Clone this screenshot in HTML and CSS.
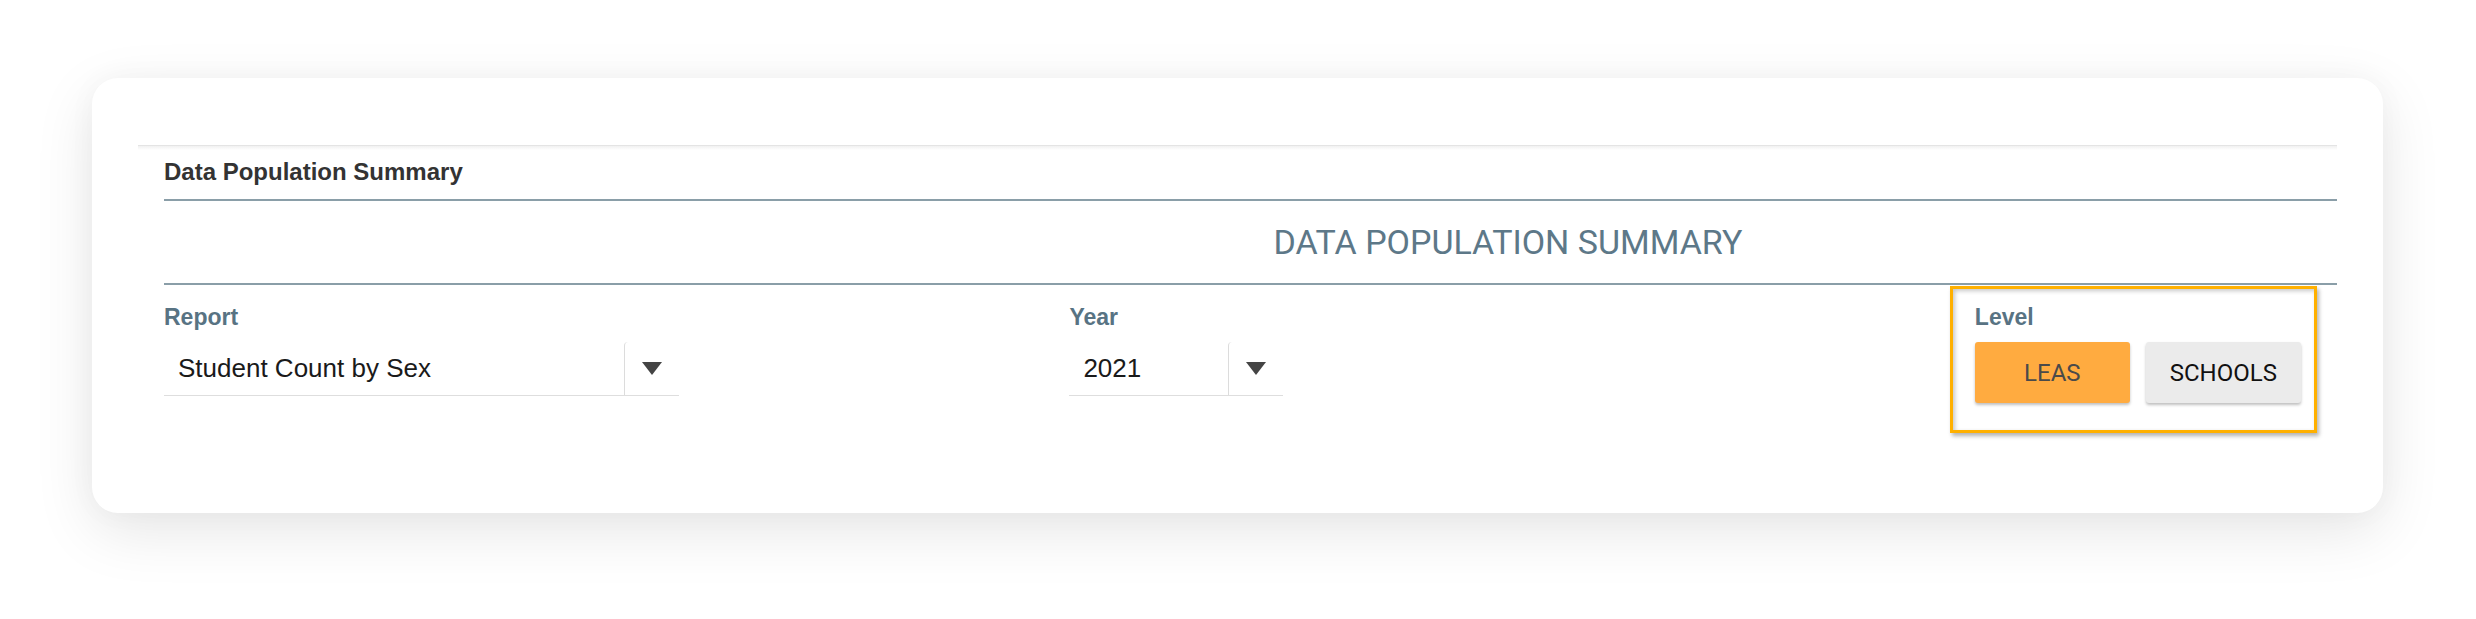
FILE: index.html
```html
<!DOCTYPE html>
<html lang="en">

<head>
  <meta charset="UTF-8">
  <meta name="viewport" content="width=device-width, initial-scale=1.0">
  <title>Data Population Summary</title>
  <link rel="stylesheet" href="styles.css">
</head>

<body>
  <div class="card">
    <div class="panel">
      <div class="panel-head">Data Population Summary</div>
      <h1 class="report-title">DATA POPULATION SUMMARY</h1>

      <div class="filters">
        <div class="field">
          <label class="field-label">Report</label>
          <div class="select select-wide">
            <span class="select-value">Student Count by Sex</span>
            <span class="select-arrow">
              <svg width="20" height="13" viewBox="0 0 20 13"><polygon points="0,0 20,0 10,13" fill="#444"/></svg>
            </span>
          </div>
        </div>

        <div class="field">
          <label class="field-label">Year</label>
          <div class="select select-narrow">
            <span class="select-value">2021</span>
            <span class="select-arrow">
              <svg width="20" height="13" viewBox="0 0 20 13"><polygon points="0,0 20,0 10,13" fill="#444"/></svg>
            </span>
          </div>
        </div>

        <div class="field field-level">
          <label class="field-label">Level</label>
          <div class="level-buttons">
            <button class="level-btn active">LEAS</button>
            <button class="level-btn">SCHOOLS</button>
          </div>
        </div>
      </div>
    </div>
  </div>
</body>

</html>
```

FILE: styles.css
```css
html,
body {
  min-height: 100vh;
}

body {
  margin: 0;
  padding-top: 78px;
  box-sizing: border-box;
  background-color: #fff;
  font-family: "Liberation Sans", Arial, sans-serif;
}

.card {
  margin: 0 93px 0 92px;
  padding: 67px 46px 110px 46px;
  background-color: #fff;
  border-radius: 26px;
  box-shadow: 0 18px 60px rgba(0, 0, 0, 0.1), 0 0 30px rgba(0, 0, 0, 0.03);
}

.panel {
  padding-left: 26px;
  border-top: 1px solid #e4e4e4;
  background: linear-gradient(to bottom, #f1f1f1, #fff) no-repeat top / 100% 4px;
}

.panel-head {
  padding: 12px 0 14px;
  font-size: 24px;
  font-weight: bold;
  line-height: 27px;
  color: #333;
  border-bottom: 2px solid #8a9ea8;
}

.report-title {
  margin: 0;
  height: 82px;
  padding-left: 515px;
  display: flex;
  align-items: center;
  justify-content: center;
  font-family: Roboto, sans-serif;
  font-size: 34px;
  font-weight: 400;
  color: #5d7888;
  border-bottom: 2px solid #8a9ea8;
}

.filters {
  display: grid;
  grid-template-columns: 5fr 5fr 2fr;
  padding-top: 19px;
}

.field-label {
  display: block;
  margin-bottom: 12px;
  font-size: 23px;
  font-weight: bold;
  line-height: 26px;
  color: #587383;
}

.select {
  display: flex;
  height: 53px;
  border-bottom: 1px solid #dedede;
}

.select-wide {
  width: 515px;
}

.select-narrow {
  width: 214px;
}

.select-value {
  flex: 1;
  padding-left: 14px;
  font-size: 26px;
  line-height: 53px;
  color: #1a1a1a;
}

.select-arrow {
  width: 54px;
  display: flex;
  align-items: center;
  justify-content: center;
  border-left: 1px solid #dcdcdc;
  border-top-left-radius: 4px;
}

.field-level {
  position: relative;
}

/* highlight frame around the level picker */
.field-level::after {
  content: "";
  position: absolute;
  top: -18px;
  left: -25px;
  right: 20px;
  bottom: -30px;
  border: 3px solid #ffb000;
  box-shadow: 2px 3px 4px rgba(0, 0, 0, 0.3), inset 2px 2px 4px rgba(0, 0, 0, 0.22);
  pointer-events: none;
}

.level-buttons {
  display: flex;
  gap: 16px;
}

.level-btn {
  width: 155px;
  height: 61px;
  border: none;
  border-radius: 3px;
  background-color: #ebebeb;
  color: #111;
  font-family: Roboto, sans-serif;
  font-size: 24px;
  box-shadow: 0 2px 3px rgba(0, 0, 0, 0.25);
  cursor: pointer;
}

.level-btn.active {
  background-color: #ffab40;
  color: #4a4a4a;
}
```
